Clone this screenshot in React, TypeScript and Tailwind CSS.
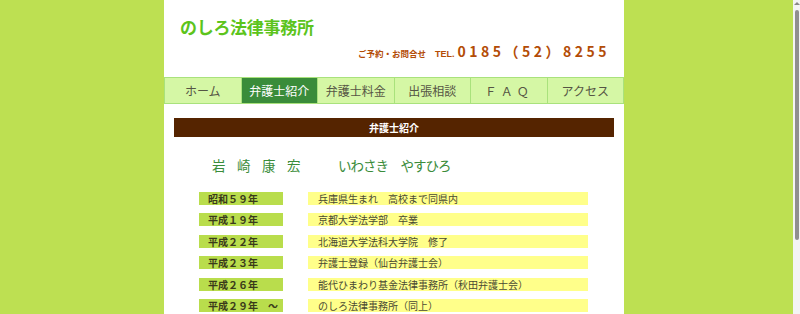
import React from "react";

const nav = ["ホーム", "弁護士紹介", "弁護士料金", "出張相談", "ＦＡＱ", "アクセス"];
const rows: [string, string][] = [
  ["昭和５９年", "兵庫県生まれ　高校まで同県内"],
  ["平成１９年", "京都大学法学部　卒業"],
  ["平成２２年", "北海道大学法科大学院　修了"],
  ["平成２３年", "弁護士登録（仙台弁護士会）"],
  ["平成２６年", "能代ひまわり基金法律事務所（秋田弁護士会）"],
  ["平成２９年　～", "のしろ法律事務所（同上）"],
];

const font = { fontFamily: '"Noto Sans CJK JP", "Noto Sans", sans-serif' };

export default function App() {
  return (
    <div className="flex h-[314px] w-[800px] overflow-hidden" style={font}>
      <div className="flex-1 bg-[#bde052] pl-[164px]">
        <div className="h-full w-[460px] bg-white">
          <div className="h-[77px] flex flex-col">
            <div className="pl-[16px] pt-[16px] text-[17px] leading-[22px] font-bold text-[#5cc41c] tracking-[-0.3px]">
              のしろ法律事務所
            </div>
            <div className="mt-[5px] flex items-baseline justify-end pr-[14px] text-[#b34c06] font-bold">
              <span className="text-[8.5px] leading-[14px]">ご予約・お問合せ</span>
              <span className="ml-[9px] text-[9px] leading-[14px]" style={{ fontFamily: '"Liberation Sans", sans-serif' }}>TEL.</span>
              <span className="ml-[3px] text-[14px] leading-[16px] tracking-[3.5px]">
                0185（52）8255
              </span>
            </div>
          </div>
          <div className="flex h-[27px] border border-[#a9e27c] bg-[#d5f7a5]">
            {nav.map((n, i) => (
              <div
                key={n}
                className={`flex flex-1 items-center justify-center text-[12px] ${
                  i > 0 ? "border-l border-[#a9e27c]" : ""
                } ${i === 1 ? "bg-[#3a8c3a] text-white" : "text-[#555544]"} ${i === 4 ? "tracking-[4px]" : ""}`}
              >
                {n}
              </div>
            ))}
          </div>
          <div className="mx-[10px] mt-[14px] flex h-[19px] items-center justify-center bg-[#552400] text-[10px] font-bold text-white">
            弁護士紹介
          </div>
          <div className="mt-[19px] flex pl-[48px] text-[13.5px] leading-[18px] text-[#3a8c3a]">
            <span className="w-[126px] shrink-0 tracking-[11.5px]">岩崎康宏</span>
            <span className="tracking-[-1px]">いわさき　やすひろ</span>
          </div>
          <div className="mt-[18px] flex flex-col gap-[8.4px] pl-[35px]">
            {rows.map(([y, d]) => (
              <div key={y} className="flex h-[13px] items-center">
                <div className="flex h-full w-[84px] items-center bg-[#b9dd4c] pl-[9px] text-[10px] font-bold text-[#3a3a1a]">
                  {y}
                </div>
                <div className="ml-[25px] flex h-full w-[280px] items-center bg-[#ffff8a] pl-[10px] text-[10px] text-[#4a4a33]">
                  {d}
                </div>
              </div>
            ))}
          </div>
        </div>
      </div>
      <div className="flex w-[7px] flex-col items-center bg-[#f4f4f4]">
        <div className="mt-[2px] h-0 w-0 border-x-[3px] border-b-[3px] border-x-transparent border-b-[#888]" />
        <div className="mt-[5px] h-[230px] w-[4px] rounded-sm bg-[#8f8f8f]" />
      </div>
    </div>
  );
}
